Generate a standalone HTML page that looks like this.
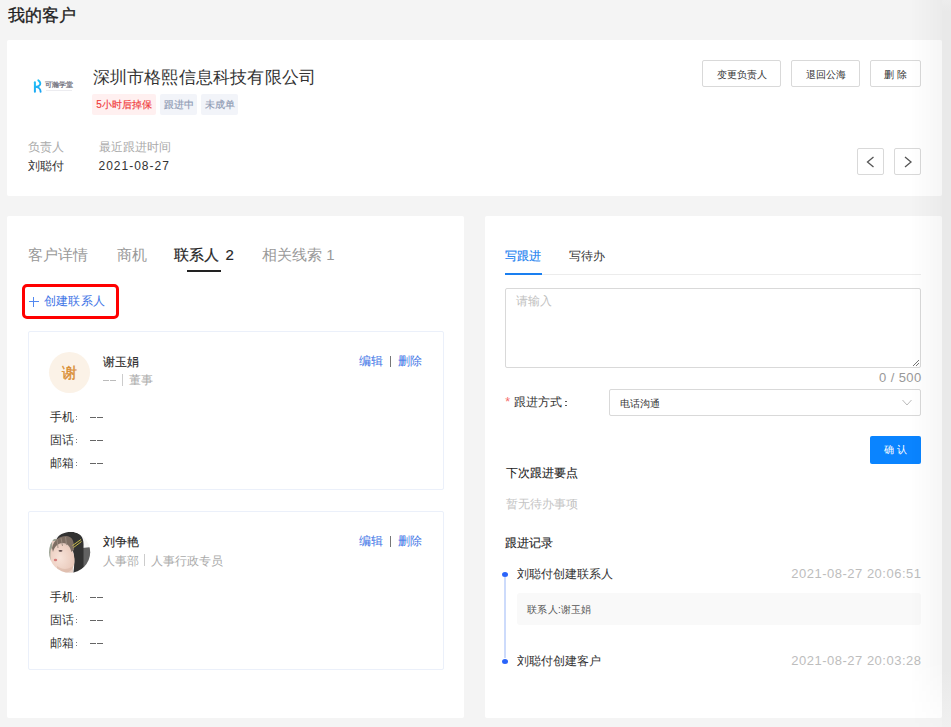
<!DOCTYPE html>
<html><head><meta charset="utf-8">
<style>
*{box-sizing:border-box;margin:0;padding:0}
html,body{width:951px;height:727px;overflow:hidden}
body{background:#f4f4f4;font-family:"Liberation Sans",sans-serif;position:relative;color:#333}
.a{position:absolute;white-space:nowrap}
.t{position:absolute;white-space:nowrap;line-height:1}
.card{position:absolute;background:#fff;border-radius:2px}
.btn{position:absolute;border:1px solid #d9d9d9;border-radius:2px;background:#fff;font-size:10px;line-height:1;color:#333;text-align:center}
.tb{height:27px;line-height:25px;padding-top:1px}
.tag{position:absolute;height:21px;border-radius:2px;font-size:10px;line-height:22px;text-align:center;-webkit-text-stroke:0.15px currentColor}
.lbl{color:#aaa}
.blue{color:#3d74e6}
.med{-webkit-text-stroke:0.25px currentColor}
.ccard{position:absolute;left:28px;width:416px;height:159px;border:1px solid #ebf0fa;border-radius:2px;background:#fff}
</style></head><body>
<div class="t med" style="left:7.5px;top:6.5px;font-size:17px;color:#222;-webkit-text-stroke:0.3px #222">我的客户</div>

<!-- top card -->
<div class="card" style="left:7px;top:40px;width:935px;height:156px"></div>
<!-- logo -->
<svg class="a" style="left:28px;top:74px" width="50" height="24" viewBox="0 0 50 24">
  <defs><linearGradient id="lg" gradientUnits="userSpaceOnUse" x1="6" y1="6" x2="13" y2="18"><stop offset="0" stop-color="#22c6f7"/><stop offset="1" stop-color="#1aa2f2"/></linearGradient></defs>
  <path d="M6.9 8.3 V17.8" stroke="url(#lg)" stroke-width="2" fill="none" stroke-linecap="round"/>
  <path d="M6.9 12.8 C10.5 12.8 12.6 11.2 12.3 9.2 C12.1 7.9 11.2 6.8 10.3 6.3" stroke="url(#lg)" stroke-width="1.9" fill="none" stroke-linecap="round"/>
  <path d="M6.9 12.8 C10.3 12.8 12.6 14.6 12.6 17.8" stroke="url(#lg)" stroke-width="1.9" fill="none" stroke-linecap="round"/>
</svg>
<div class="t" style="left:45px;top:81.5px;font-size:6.8px;color:#70707c;-webkit-text-stroke:0.25px #70707c;letter-spacing:-0.1px">可瀚学堂</div>
<div class="a" style="left:45.5px;top:90px;width:26px;height:1.3px;background:#ececf0"></div>

<div class="t" style="left:92.5px;top:68.5px;font-size:17px;color:#333;letter-spacing:0.22px">深圳市格熙信息科技有限公司</div>
<div class="tag" style="left:92px;top:94px;width:64px;background:#fff0f0;color:#f03a3a">5小时后掉保</div>
<div class="tag" style="left:160px;top:94px;width:37px;background:#f2f4f9;color:#8e9ab3">跟进中</div>
<div class="tag" style="left:201px;top:94px;width:37px;background:#f2f4f9;color:#8e9ab3">未成单</div>

<div class="t lbl" style="left:28px;top:141px;font-size:12px">负责人</div>
<div class="t lbl" style="left:98.5px;top:141px;font-size:12px">最近跟进时间</div>
<div class="t" style="left:28px;top:160px;font-size:12px;color:#333">刘聪付</div>
<div class="t" style="left:98.5px;top:160px;font-size:12px;color:#333;letter-spacing:1px">2021-08-27</div>

<div class="btn tb" style="left:702px;top:60px;width:79px">变更负责人</div>
<div class="btn tb" style="left:791px;top:60px;width:69px">退回公海</div>
<div class="btn tb" style="left:870px;top:60px;width:51px">删 除</div>

<div class="btn" style="left:857px;top:148px;width:27px;height:27px">
  <svg width="25" height="25" viewBox="0 0 25 25" style="position:absolute;left:0;top:0"><path d="M15.5 8 L9.5 13 L15.5 18" stroke="#555" stroke-width="1.3" fill="none"/></svg>
</div>
<div class="btn" style="left:894px;top:148px;width:27px;height:27px">
  <svg width="25" height="25" viewBox="0 0 25 25" style="position:absolute;left:0;top:0"><path d="M10 8 L16 13 L10 18" stroke="#555" stroke-width="1.3" fill="none"/></svg>
</div>

<!-- left panel -->
<div class="card" style="left:7px;top:216px;width:457px;height:502px"></div>
<div class="t" style="left:28px;top:247px;font-size:15px;color:#999">客户详情</div>
<div class="t" style="left:116.5px;top:247px;font-size:15px;color:#999">商机</div>
<div class="t" style="left:174px;top:247px;font-size:15px;color:#262626;-webkit-text-stroke:0.2px #262626">联系人 <span style="margin-left:2.4px">2</span></div>
<div class="t" style="left:262px;top:247px;font-size:15px;color:#999">相关线索 1</div>
<div class="a" style="left:187px;top:270px;width:34px;height:2px;background:#222"></div>

<div class="a" style="left:22px;top:284px;width:97px;height:35px;border:3px solid #f00;border-radius:5px"></div>
<div class="a" style="left:29px;top:301.3px;width:9.6px;height:1.2px;background:#5288f0"></div>
<div class="a" style="left:33.2px;top:297.1px;width:1.2px;height:9.6px;background:#5288f0"></div>
<div class="t blue" style="left:43.5px;top:294.5px;font-size:12px;letter-spacing:0.4px">创建联系人</div>

<!-- contact 1 -->
<div class="ccard" style="top:331px"></div>
<div class="a" style="left:48.5px;top:351.5px;width:41.5px;height:41.5px;border-radius:50%;background:#fbf2e7"></div>
<div class="t" style="left:61.5px;top:364.5px;font-size:15px;color:#d98d32;-webkit-text-stroke:0.4px #d98d32">谢</div>
<div class="t" style="left:102.5px;top:356px;font-size:12px;color:#262626;-webkit-text-stroke:0.15px #262626">谢玉娟</div>
<div class="a" style="left:102.9px;top:380.3px;width:6px;height:1px;background:#bbb"></div>
<div class="a" style="left:110.4px;top:380.3px;width:6px;height:1px;background:#bbb"></div>
<div class="a" style="left:122px;top:374px;width:1px;height:11.5px;background:#ccc"></div>
<div class="t lbl" style="left:129px;top:374px;font-size:12px">董事</div>
<div class="t blue" style="left:358.5px;top:355px;font-size:12px">编辑</div>
<div class="a" style="left:390px;top:356px;width:1px;height:11px;background:#777"></div>
<div class="t blue" style="left:397.5px;top:355px;font-size:12px">删除</div>
<div class="t" style="left:49.5px;top:410.8px;font-size:12px;color:#333">手机</div>
<div class="a" style="left:75.5px;top:415.5px;width:1.4px;height:1.4px;background:#555;border-radius:1px"></div>
<div class="a" style="left:75.5px;top:419.0px;width:1.4px;height:1.4px;background:#555;border-radius:1px"></div>
<div class="a" style="left:89.6px;top:417.0px;width:6px;height:1px;background:#666"></div>
<div class="a" style="left:97.1px;top:417.0px;width:6px;height:1px;background:#666"></div>
<div class="t" style="left:49.5px;top:433.8px;font-size:12px;color:#333">固话</div>
<div class="a" style="left:75.5px;top:438.5px;width:1.4px;height:1.4px;background:#555;border-radius:1px"></div>
<div class="a" style="left:75.5px;top:442.0px;width:1.4px;height:1.4px;background:#555;border-radius:1px"></div>
<div class="a" style="left:89.6px;top:440.0px;width:6px;height:1px;background:#666"></div>
<div class="a" style="left:97.1px;top:440.0px;width:6px;height:1px;background:#666"></div>
<div class="t" style="left:49.5px;top:456.8px;font-size:12px;color:#333">邮箱</div>
<div class="a" style="left:75.5px;top:461.5px;width:1.4px;height:1.4px;background:#555;border-radius:1px"></div>
<div class="a" style="left:75.5px;top:465.0px;width:1.4px;height:1.4px;background:#555;border-radius:1px"></div>
<div class="a" style="left:89.6px;top:463.0px;width:6px;height:1px;background:#666"></div>
<div class="a" style="left:97.1px;top:463.0px;width:6px;height:1px;background:#666"></div>

<!-- contact 2 -->
<div class="ccard" style="top:511px"></div>
<svg class="a" style="left:46px;top:529px" width="48" height="48" viewBox="0 0 48 48">
  <defs><clipPath id="cp"><circle cx="23.6" cy="23.2" r="20.6"/></clipPath>
  <radialGradient id="skin" cx="0.4" cy="0.45" r="0.65"><stop offset="0" stop-color="#f7e3d9"/><stop offset="1" stop-color="#e8c7b8"/></radialGradient>
  <filter id="bl" x="-0.2" y="-0.2" width="1.4" height="1.4"><feGaussianBlur stdDeviation="0.6"/></filter></defs>
  <g clip-path="url(#cp)">
    <rect width="48" height="48" fill="#f6f6f6"/>
    <g filter="url(#bl)">
    <rect x="0" y="10" width="10" height="30" fill="#9fa596"/>
    <path d="M36 19 L46 18 L46 38 L36 40 Z" fill="#626262"/>
    <path d="M10 12 C12 4 22 2 30 3.5 C35.5 5 38 10 37.5 18 L37.5 44 L27 46 C29 36 28.5 27 26.5 20 L14 13 Z" fill="#303030"/>
    <rect x="6" y="12" width="20" height="10" fill="#e2c9bd"/>
    <path d="M4.5 23 C5 17 11 15 17 16 C24 17 28 22 28.5 30 C29 38 25 44 17 45 L8 45 C5 39 4 30 4.5 23 Z" fill="url(#skin)"/>
    <path d="M6 19 C8 10 15 6.5 21 7 C26 7.5 28.5 12 28 21 L25.5 23 C24 17 21 14 16.5 14 C12 14.5 8.5 17 7 23 Z" fill="#7d6e64"/>
    <path d="M11 10 L12 19 M15 9 L16.5 17 M19.5 8 L20.5 16" stroke="#9c8c80" stroke-width="0.9"/>
    <ellipse cx="9.5" cy="31" rx="1.7" ry="1.2" fill="#d67a78"/>
    <ellipse cx="14.5" cy="21.8" rx="2" ry="0.9" fill="#5a4646"/>
    <path d="M11 37 C16 41 22 41 27 37 L27 46 L11 46 Z" fill="#d9b5a5" opacity="0.6"/>
    </g>
    <path d="M26.5 16.5 L35 10.5 M27.5 18.5 L35.5 12.5" stroke="#d9c94c" stroke-width="0.9"/>
  </g>
</svg>
<div class="t" style="left:102.5px;top:536px;font-size:12px;color:#262626;-webkit-text-stroke:0.15px #262626">刘争艳</div>
<div class="t lbl" style="left:102.5px;top:554.5px;font-size:12px">人事部</div>
<div class="a" style="left:144px;top:554px;width:1px;height:11.5px;background:#ccc"></div>
<div class="t lbl" style="left:150.5px;top:554.5px;font-size:12px">人事行政专员</div>
<div class="t blue" style="left:358.5px;top:535px;font-size:12px">编辑</div>
<div class="a" style="left:390px;top:536px;width:1px;height:11px;background:#777"></div>
<div class="t blue" style="left:397.5px;top:535px;font-size:12px">删除</div>
<div class="t" style="left:49.5px;top:590.8px;font-size:12px;color:#333">手机</div>
<div class="a" style="left:75.5px;top:595.5px;width:1.4px;height:1.4px;background:#555;border-radius:1px"></div>
<div class="a" style="left:75.5px;top:599.0px;width:1.4px;height:1.4px;background:#555;border-radius:1px"></div>
<div class="a" style="left:89.6px;top:597.0px;width:6px;height:1px;background:#666"></div>
<div class="a" style="left:97.1px;top:597.0px;width:6px;height:1px;background:#666"></div>
<div class="t" style="left:49.5px;top:613.8px;font-size:12px;color:#333">固话</div>
<div class="a" style="left:75.5px;top:618.5px;width:1.4px;height:1.4px;background:#555;border-radius:1px"></div>
<div class="a" style="left:75.5px;top:622.0px;width:1.4px;height:1.4px;background:#555;border-radius:1px"></div>
<div class="a" style="left:89.6px;top:620.0px;width:6px;height:1px;background:#666"></div>
<div class="a" style="left:97.1px;top:620.0px;width:6px;height:1px;background:#666"></div>
<div class="t" style="left:49.5px;top:636.8px;font-size:12px;color:#333">邮箱</div>
<div class="a" style="left:75.5px;top:641.5px;width:1.4px;height:1.4px;background:#555;border-radius:1px"></div>
<div class="a" style="left:75.5px;top:645.0px;width:1.4px;height:1.4px;background:#555;border-radius:1px"></div>
<div class="a" style="left:89.6px;top:643.0px;width:6px;height:1px;background:#666"></div>
<div class="a" style="left:97.1px;top:643.0px;width:6px;height:1px;background:#666"></div>

<!-- right panel -->
<div class="card" style="left:485px;top:216px;width:457px;height:502px"></div>
<div class="t" style="left:505px;top:249.5px;font-size:12px;color:#1a7ff0;-webkit-text-stroke:0.15px #1a7ff0">写跟进</div>
<div class="t" style="left:569px;top:249.5px;font-size:12px;color:#333">写待办</div>
<div class="a" style="left:505px;top:274px;width:416px;height:1px;background:#ececec"></div>
<div class="a" style="left:505px;top:273px;width:37px;height:2px;background:#1a7ff0"></div>

<div class="a" style="left:505px;top:288px;width:416px;height:80px;border:1px solid #d9d9d9;border-radius:2px"></div>
<svg class="a" style="left:911px;top:358px" width="9" height="9" viewBox="0 0 9 9"><path d="M8 2 L2 8 M8 5 L5 8" stroke="#666" stroke-width="0.9"/></svg>
<div class="t" style="left:516px;top:295px;font-size:12px;color:#bfbfbf">请输入</div>
<div class="t" style="left:879px;top:370.5px;font-size:13px;color:#999;letter-spacing:0.4px">0 / 500</div>

<div class="t" style="left:505.3px;top:396px;font-size:12.5px;color:#f56c6c">*</div>
<div class="t" style="left:514px;top:396px;font-size:12px;color:#333">跟进方式</div>
<div class="a" style="left:565.3px;top:400.5px;width:1.5px;height:1.5px;background:#444;border-radius:1px"></div>
<div class="a" style="left:565.3px;top:404.5px;width:1.5px;height:1.5px;background:#444;border-radius:1px"></div>
<div class="a" style="left:609px;top:389px;width:312px;height:27px;border:1px solid #d9d9d9;border-radius:2px"></div>
<div class="t" style="left:619.5px;top:398.5px;font-size:10px;color:#333">电话沟通</div>
<svg class="a" style="left:901px;top:398px" width="12" height="10" viewBox="0 0 12 10"><path d="M1.5 2 L6 7 L10.5 2" stroke="#bbb" stroke-width="1" fill="none"/></svg>

<div class="a" style="left:870px;top:436px;width:51px;height:28px;background:#0a84ff;border-radius:2px;color:#fff;font-size:10px;line-height:28px;text-align:center">确 认</div>

<div class="t" style="left:505.5px;top:467px;font-size:12px;color:#222;-webkit-text-stroke:0.1px #222">下次跟进要点</div>
<div class="t" style="left:505.5px;top:497.5px;font-size:12px;color:#c4c4c4">暂无待办事项</div>
<div class="t" style="left:505px;top:537px;font-size:12px;color:#222;-webkit-text-stroke:0.1px #222">跟进记录</div>

<div class="a" style="left:504px;top:577px;width:2px;height:80.5px;background:#cddbfb"></div>
<div class="a" style="left:502px;top:572px;width:6px;height:5px;border-radius:50%;background:#2a64fa"></div>
<div class="a" style="left:502px;top:658.7px;width:6px;height:5px;border-radius:50%;background:#2a64fa"></div>

<div class="t" style="left:517px;top:568px;font-size:12px;color:#333">刘聪付创建联系人</div>
<div class="t" style="left:720px;top:566.5px;width:201.5px;text-align:right;font-size:13px;color:#bdbdbd;letter-spacing:0.5px">2021-08-27 20:06:51</div>
<div class="a" style="left:517px;top:593px;width:404px;height:32px;background:#f9f9f9;border-radius:3px"></div>
<div class="t" style="left:527.3px;top:604.5px;font-size:10px;color:#555;letter-spacing:0.2px">联系人:谢玉娟</div>
<div class="t" style="left:517px;top:655px;font-size:12px;color:#333">刘聪付创建客户</div>
<div class="t" style="left:720px;top:653.8px;width:201.5px;text-align:right;font-size:13px;color:#bdbdbd;letter-spacing:0.5px">2021-08-27 20:03:28</div>

<!-- right edge shading -->
<div class="a" style="left:910px;top:0;width:32px;height:727px;background:linear-gradient(to right,rgba(0,0,0,0),rgba(0,0,0,0.035));-webkit-mask-image:linear-gradient(to bottom,#000 0,#000 660px,rgba(0,0,0,0.2) 727px)"></div>
<div class="a" style="left:942px;top:0;width:9px;height:727px;background:linear-gradient(to bottom,#ededed 0,#e9e9e9 12px,#e9e9e9 670px,#f0f0f0 727px)"></div>
</body></html>
